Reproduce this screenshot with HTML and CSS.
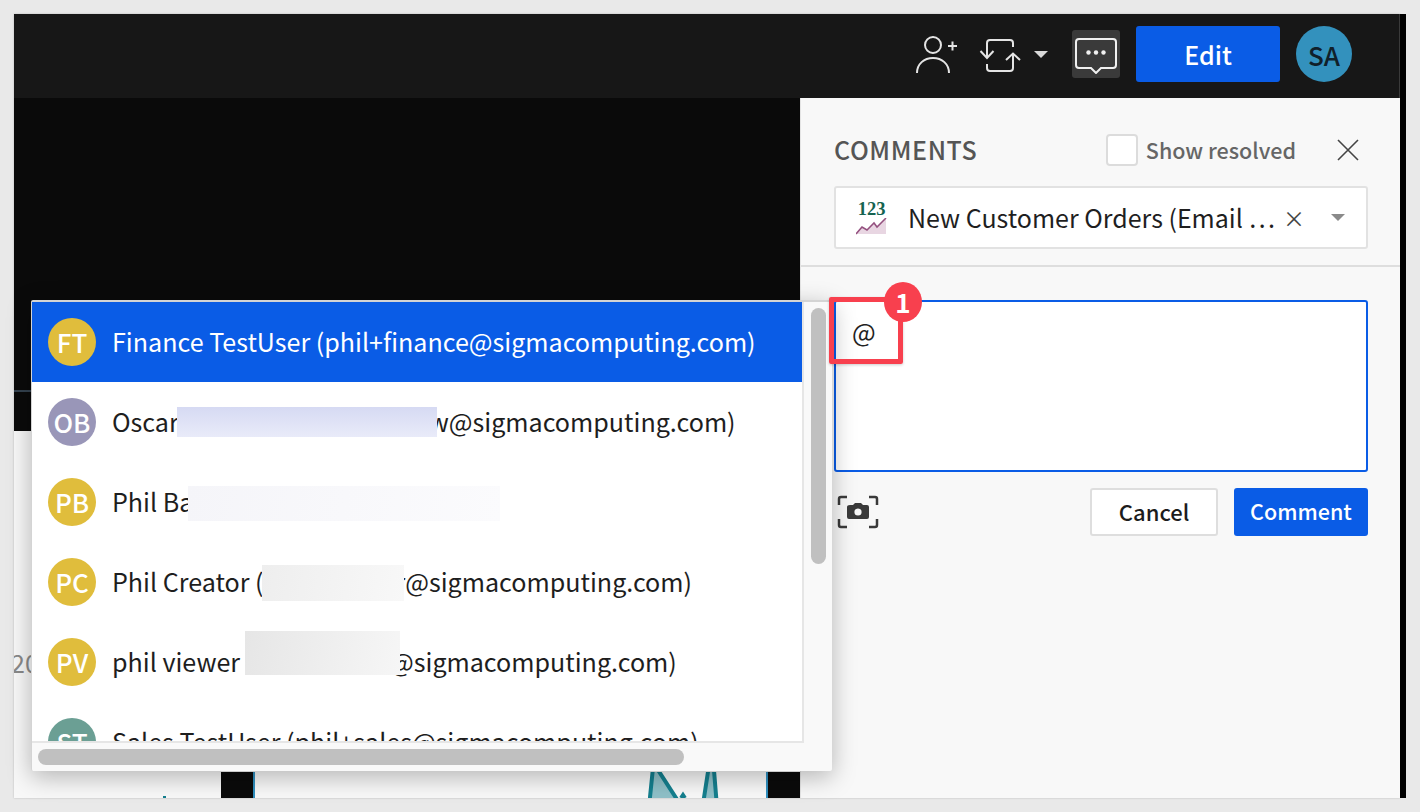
FILE: index.html
```html
<!DOCTYPE html>
<html lang="en">
<head>
<meta charset="utf-8">
<title>Comments</title>
<link rel="stylesheet" href="styles.css">
</head>
<body>
<div class="frame">
  <div class="app">
    <header class="topbar">
      <svg class="ic-invite" width="44" height="40" viewBox="0 0 44 40" fill="none" stroke="#e4e4e4" stroke-width="2"><circle cx="17" cy="10" r="8"/><path d="M1 38c0-9 7-15 16-15s16 6 16 15"/><path d="M32 11h9M36.500 6.500v9"/></svg>
      <svg class="ic-swap" width="42" height="34" viewBox="0 0 42 34" fill="none" stroke="#e4e4e4" stroke-width="2"><path d="M8 19V4q0-3 3-3h20q3 0 3 3v4"/><path d="M1.500 12L8 19l6.500-7"/><path d="M8 25v4q0 3 3 3h20q3 0 3-3V15"/><path d="M27 21l7-6.500 7 6.500"/></svg>
      <span class="caret caret-light"></span>
      <button class="chat-btn"><svg width="42" height="36" viewBox="0 0 42 36" fill="none"><path d="M4 1h34q3 0 3 3v23q0 3-3 3H26l-5 5-5-5H4q-3 0-3-3V4q0-3 3-3z" stroke="#f0f0f0" stroke-width="2"/><circle cx="13.500" cy="14.500" r="2.200" fill="#f0f0f0"/><circle cx="21" cy="14.500" r="2.200" fill="#f0f0f0"/><circle cx="28.500" cy="14.500" r="2.200" fill="#f0f0f0"/></svg></button>
      <button class="edit-btn">Edit</button>
      <div class="sa">SA</div>
    </header>
    <div class="body">
      <main class="canvas">
        <div class="dark"><div class="dark-line"></div></div>
        <div class="lower">
          <div class="axis">20</div>
          <div class="strip">
            <span class="tick"></span>
            <div class="blk blk-a"></div>
            <svg class="spikes" width="74" height="26" viewBox="0 0 74 26"><path d="M1.500 30L5.500-9 30 29H55.500L64-26 68.500 29z" fill="#8fc0c8"/><path d="M1.500 30L5.500-9 30 29M33 26l2-3 2 3M55.500 29L64-26 68.500 29" fill="none" stroke="#147f8e" stroke-width="4"/></svg>
            <div class="blk blk-b"></div>
          </div>
        </div>
      </main>
      <aside class="panel">
        <div class="panel-head">
          <div class="head-row">
            <h2 class="title">COMMENTS</h2>
            <label class="resolved"><span class="check"></span>Show resolved</label>
            <svg class="close" width="24" height="22" viewBox="0 0 24 22" stroke="#444" stroke-width="1.600" fill="none"><path d="M2 1l20 20M22 1L2 21"/></svg>
          </div>
          <div class="select">
            <div class="kpi"><span class="kpi-num">123</span>
              <svg width="31" height="17" viewBox="0 0 31 17"><path d="M0 16l6-7 5 3 7-7 3 4 9-9v16z" fill="#e8d6e2"/><path d="M0 16l6-7 5 3 7-7 3 4 9-9" fill="none" stroke="#94507f" stroke-width="1.500"/></svg>
            </div>
            <span class="select-text">New Customer Orders (Email …</span>
            <span class="clear">×</span>
            <span class="caret caret-gray"></span>
          </div>
        </div>
        <div class="composer">
          <div class="textarea">@</div>
          <div class="actions">
            <svg class="camera" width="42" height="34" viewBox="0 0 42 34" fill="none"><path d="M2 10V4q0-2 2-2h6M32 2h6q2 0 2 2v6M40 24v6q0 2-2 2h-6M10 32H4q-2 0-2-2v-6" stroke="#3a3a3a" stroke-width="2.500"/><path d="M13 10h3l2-2h6l2 2h4q2 0 2 2v10q0 2-2 2H12q-2 0-2-2V12q0-2 3-2z" fill="#3a3a3a"/><circle cx="21" cy="17" r="3.600" fill="#f8f8f8"/></svg>
            <button class="cancel">Cancel</button>
            <button class="comment">Comment</button>
          </div>
        </div>
      </aside>
    </div>
  </div>
  <div class="edge"></div>

  <div class="dropdown">
    <div class="list">
      <div class="row active"><span class="av gold">FT</span><span>Finance TestUser (phil+finance@sigmacomputing.com)</span></div>
      <div class="row"><span class="av purple">OB</span><span>Oscar</span><span class="rd rd-1"></span><span class="tail-1">w@sigmacomputing.com)</span></div>
      <div class="row"><span class="av gold">PB</span><span class="clip">Phil Ba</span><span class="rd rd-2"></span></div>
      <div class="row"><span class="av gold">PC</span><span>Phil Creator (</span><span class="rd rd-3"></span><span class="tail-3">r@sigmacomputing.com)</span></div>
      <div class="row"><span class="av gold">PV</span><span>phil viewer</span><span class="rd rd-4"></span><span class="tail-4">@sigmacomputing.com)</span></div>
      <div class="row"><span class="av teal">ST</span><span>Sales TestUser (phil+sales@sigmacomputing.com)</span></div>
    </div>
    <div class="vbar"><div class="vthumb"></div></div>
    <div class="hbar"><div class="hthumb"></div></div>
  </div>

  <div class="callout"></div>
  <div class="badge">1</div>
</div>
</body>
</html>
```
FILE: styles.css
```css
* { box-sizing: border-box; }
html, body { margin: 0; height: 812px; overflow: hidden; }
body {
  background: #e9e9e9;
  font-family: "Noto Sans CJK JP", "Noto Sans", sans-serif;
  color: #1c1c1c;
}
button { font-family: inherit; border: 0; padding: 0; cursor: pointer; }

.frame { position: relative; display: flex; width: 1420px; height: 812px; padding: 14px; }
.app { width: 1386px; height: 784px; display: flex; flex-direction: column; flex: none; box-shadow: 0 0 2px rgba(0,0,0,.2); }
.edge { width: 6px; height: 784px; background: #000; flex: none; }

.topbar { height: 84px; background: #171717; display: flex; align-items: center; border-right: 1px solid #3a3a3a; padding: 0 0 4px 902px; flex: none; }
.ic-invite { margin-top: 2px; }
.ic-swap { margin-left: 19px; margin-top: 3px; }
.caret { width: 0; height: 0; border-left: 7px solid transparent; border-right: 7px solid transparent; display: block; }
.caret-light { border-top: 7px solid #d8d8d8; margin-left: 13px; }
.chat-btn { width: 48px; height: 48px; margin-left: 24px; background: #3a3a3a; border-radius: 3px; display: flex; align-items: center; justify-content: center; padding-top: 3px; }
.edit-btn { width: 144px; height: 56px; margin-left: 16px; background: #0a5ce6; color: #fff; border-radius: 3px; font-size: 25px; font-weight: 500; }
.sa { width: 56px; height: 56px; margin-left: 16px; background: #3391bd; border-radius: 50%; color: #10202a; font-size: 26px; font-weight: 500; display: flex; align-items: center; justify-content: center; }

.body { flex: 1; display: flex; min-height: 0; }
.canvas { width: 786px; flex: none; display: flex; flex-direction: column; background: #fff; overflow: hidden; }
.dark { height: 333px; background: #0a0a0a; padding-top: 292px; }
.dark-line { height: 2px; background: #34424f; }
.lower { flex: 1; display: flex; flex-direction: column; justify-content: flex-end; background: #f8f8f8; }
.axis { color: #8a8a8a; font-size: 25px; line-height: 32px; margin-bottom: 94px; margin-left: -3px; }
.strip { height: 26px; display: flex; align-items: flex-end; }
.tick { width: 3px; height: 2px; background: #147f8e; margin-left: 149px; flex: none; }
.blk { height: 26px; background: #0a0a0a; flex: none; }
.blk-a { width: 34px; margin-left: 55px; border-right: 2px solid #2f8fbf; }
.spikes { margin-left: 393px; flex: none; }
.blk-b { width: 34px; margin-left: 44px; border-left: 2px solid #2f8fbf; }

.panel { width: 600px; flex: none; background: #f8f8f8; border-left: 1px solid #e4e4e4; }
.panel-head { padding: 36px 32px 17px 33px; border-bottom: 2px solid #dedede; height: 169px; }
.head-row { display: flex; align-items: center; height: 32px; }
.title { margin: 0; font-size: 25px; font-weight: 500; letter-spacing: .6px; color: #555; line-height: 32px; position: relative; top: -1px; }
.resolved { margin-left: auto; display: flex; align-items: center; font-size: 21.500px; font-weight: 500; color: #666; line-height: 32px; }
.check { width: 32px; height: 32px; border: 2px solid #dcdcdc; border-radius: 4px; background: #fff; margin-right: 8px; }
.close { margin-left: 40px; margin-right: 8px; flex: none; }
.select { margin-top: 20px; height: 63px; background: #fff; border: 2px solid #e2e2e2; border-radius: 3px; display: flex; align-items: center; padding-left: 20px; }
.kpi { width: 31px; display: flex; flex-direction: column; align-items: center; flex: none; }
.kpi-num { font-family: "Liberation Serif", serif; font-weight: 700; font-size: 18.500px; line-height: 16px; color: #156350; }
.kpi svg { display: block; margin-top: 1px; }
.select-text { margin-left: 21px; font-size: 25px; line-height: 34px; color: #1f1f1f; white-space: nowrap; width: 368px; flex: none; position: relative; top: -1px; }
.clear { margin-left: 7px; font-size: 22px; line-height: 30px; color: #444; position: relative; top: -1px; }
.caret-gray { border-top: 7px solid #8a8a8a; margin-left: 26px; }

.composer { padding: 33px 32px 0 33px; }
.textarea { height: 172px; background: #fff; border: 2px solid #0a5ce6; border-radius: 3px; padding: 9px 16px; font-size: 25px; line-height: 40px; color: #222; }
.actions { display: flex; align-items: center; margin-top: 16px; height: 48px; }
.camera { margin-left: 3px; }
.cancel { margin-left: auto; width: 128px; height: 48px; background: #fff; border: 2px solid #dedede; border-radius: 3px; font-size: 22px; font-weight: 500; color: #1c1c1c; padding-bottom: 3px; }
.comment { margin-left: 16px; width: 134px; height: 48px; background: #0a5ce6; border-radius: 3px; font-size: 21.500px; font-weight: 500; color: #fff; padding-bottom: 3px; }

.dropdown { position: absolute; left: 31px; top: 300px; width: 801px; height: 471px; background: #f9f9f9; border-top: 2px solid #d4d4d4; border-left: 1px solid #d4d4d4; box-shadow: 0 6px 24px rgba(0,0,0,.28); border-radius: 2px; }
.list { width: 772px; height: 441px; background: #fff; overflow: hidden; border-right: 2px solid #e6e6e6; border-bottom: 2px solid #e6e6e6; }
.row { height: 80px; display: flex; align-items: center; padding: 0 0 2px 16px; font-size: 25.080px; white-space: pre; color: #1e1e1e; }
.row.active { background: #0a5ce6; color: #fff; }
.av { width: 48px; height: 48px; border-radius: 50%; margin: 2px 16px 0 0; flex: none; color: #fff; font-size: 26px; font-weight: 500; display: flex; align-items: center; justify-content: center; padding-bottom: 2px; }
.gold { background: #e0bd3c; }
.purple { background: #9996b8; }
.teal { background: #6b9f94; }
.clip { width: 76px; overflow: hidden; flex: none; }
.rd { display: block; flex: none; position: relative; z-index: 1; }
.rd-1 { width: 260px; height: 30px; background: linear-gradient(180deg, #d6daf3, #e9ebf9); margin: 2px 0 0 -2px; }
.rd-2 { width: 312px; height: 35px; background: linear-gradient(100deg, #f5f5f9, #fbfbfd); margin-top: 4px; }
.rd-3 { width: 142px; height: 36px; background: linear-gradient(100deg, #eeeeee, #f8f8f8); margin: 4px 0 0 -2px; }
.rd-4 { width: 155px; height: 44px; margin-left: 5px; background: linear-gradient(100deg, #e6e6e6, #f6f6f6); margin-bottom: 16px; }
.tail-1 { margin-left: -8px; }
.tail-3 { margin-left: -8px; }
.tail-4 { margin-left: -10px; }
.vbar { position: absolute; right: 6px; top: 6px; width: 15px; height: 256px; }
.vthumb { width: 15px; height: 256px; background: #c0c0c0; border-radius: 8px; }
.hbar { position: absolute; left: 6px; bottom: 6px; width: 646px; height: 16px; }
.hthumb { height: 16px; background: #c0c0c0; border-radius: 8px; }

.callout { position: absolute; left: 829px; top: 297px; width: 74px; height: 67px; border: 5px solid #f8404e; border-radius: 2px; box-shadow: 0 1px 3px rgba(0,0,0,.2); }
.badge { position: absolute; left: 884px; top: 282px; width: 38px; height: 40px; border-radius: 50%; background: #f8404e; color: #fff; font-size: 26px; font-weight: 700; display: flex; align-items: center; justify-content: center; padding-bottom: 2px; }
```
